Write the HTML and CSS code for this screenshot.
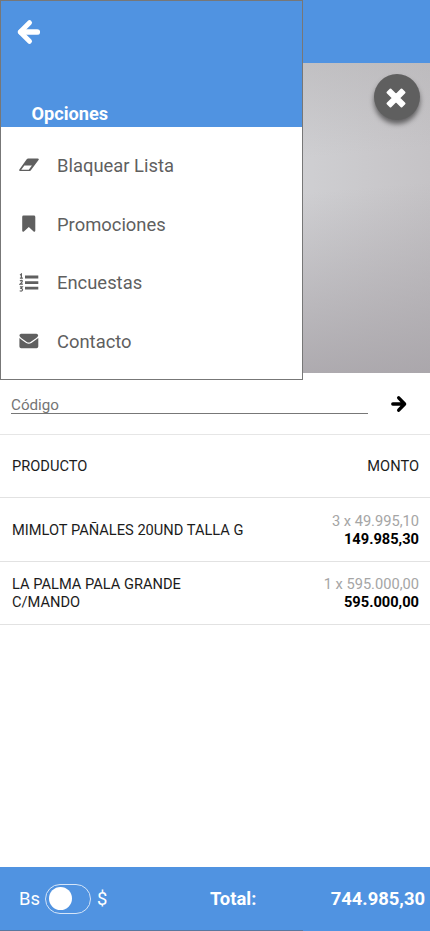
FILE: index.html
```html
<!DOCTYPE html>
<html lang="es">
<head>
<meta charset="utf-8">
<meta name="viewport" content="width=device-width, initial-scale=1">
<title>Lista</title>
<link rel="stylesheet" href="styles.css">
</head>
<body>
<div class="app">
  <header class="topbar"></header>
  <section class="camera">
    <button class="close" aria-label="Cerrar"><svg width="20" height="20" viewBox="0 0 20 20"><path d="M4.5 1.5L10 7L15.500 1.500L18.500 4.500L13 10L18.500 15.500L15.500 18.500L10 13L4.500 18.500L1.500 15.500L7 10L1.500 4.500Z"/></svg></button>
  </section>
  <form class="code">
    <input class="code-input" type="text" placeholder="Código">
    <button class="code-send" type="button" aria-label="Enviar"><svg width="16" height="18" viewBox="0 0 16 18"><path d="M1.8 9H13M7.7 2.8L13.6 9L7.7 15.2"/></svg></button>
  </form>
  <main class="list">
    <div class="row"><span>PRODUCTO</span><span>MONTO</span></div>
    <div class="row"><span class="name">MIMLOT PAÑALES 20UND TALLA G</span><div class="amount"><span class="unit">3 x 49.995,10</span><strong>149.985,30</strong></div></div>
    <div class="row"><span class="name">LA PALMA PALA GRANDE<br>C/MANDO</span><div class="amount"><span class="unit">1 x 595.000,00</span><strong>595.000,00</strong></div></div>
  </main>
  <footer class="footer">
    <div class="currency"><span>Bs</span><span class="switch"><span class="knob"></span></span><span>$</span></div>
    <strong class="total-label">Total:</strong>
    <strong class="total">744.985,30</strong>
  </footer>
  <aside class="drawer">
    <div class="drawer-head">
      <svg class="back" width="24" height="26" viewBox="0 0 24 26"><path class="shaft" d="M21.300 13H5"/><path d="M13.500 3.700L4.200 13L13.500 22.300"/></svg>
      <h2>Opciones</h2>
    </div>
    <nav class="menu">
      <a class="item"><svg width="20" height="20" viewBox="0 0 20 20"><path fill-rule="evenodd" d="M9.2 3.4H18.6Q20.4 3.7 19.5 5.1L11.9 15.2Q11.2 16.1 10 16.1H1.2Q-.5 15.8 .4 14.4L7.7 4.3Q8.2 3.5 9.2 3.4ZM5.400 10.500L2.200 14.800H9.800L12.900 10.500Z"/></svg><span>Blaquear Lista</span></a>
      <a class="item"><svg width="20" height="20" viewBox="0 0 20 20"><path d="M4.5 1.500H14.900Q16.300 1.500 16.300 2.900V16.700Q16 18.400 14.600 17.500L9.800 13L4.900 17.500Q3.500 18.400 3.200 16.700V2.900Q3.200 1.500 4.500 1.500Z"/></svg><span>Promociones</span></a>
      <a class="item"><svg width="20" height="20" viewBox="0 0 20 20"><path d="M6 2.600H19.300V5.400H6ZM6 8.200H19.300V11H6ZM6 13.800H19.300V16.600H6Z"/><path class="digits" d="M1 2.100L2.400 1V5.200M.9 5.200H3.900M.9 8Q3.100 6.600 3.300 8.100Q3.200 9.300 1 11.200H3.900M.9 13.800H3.300L2 15.500Q3.700 15.500 3.500 16.900Q3.100 18.600.7 17.800"/></svg><span>Encuestas</span></a>
      <a class="item"><svg width="20" height="20" viewBox="0 0 20 20"><path d="M2 2.700H17.500Q19.400 3 19.200 4.800Q18.600 6 17 7.200L11.500 10.900Q9.700 12.100 7.800 10.900L2.200 7Q.7 5.900.4 4.600Q.3 3 2 2.700ZM.4 7Q3.800 9.800 7.200 12Q9.800 13.600 12.400 12L19.300 7.100V15.500Q19.100 17.100 17.600 17.300H2.100Q.5 17.100.4 15.500Z"/></svg><span>Contacto</span></a>
    </nav>
  </aside>
  <div class="edge"></div>
</div>
</body>
</html>
```
FILE: styles.css
```css
* { box-sizing: border-box; }
body { margin: 0; background: #fff; font-family: Roboto, sans-serif; }
button { border: 0; padding: 0; }
.app {
  position: relative;
  width: 430px;
  height: 931px;
  display: flex;
  flex-direction: column;
  overflow: hidden;
}
.topbar { flex: none; height: 63px; background: #5093e1; }
.camera {
  flex: none;
  height: 310px;
  display: flex;
  justify-content: flex-end;
  align-items: flex-start;
  padding: 11px 10.5px 0 0;
  background:
    linear-gradient(175deg, rgba(178,176,178,.6) 0%, rgba(198,198,200,0) 35%, rgba(190,190,194,0) 45%, rgba(166,162,167,.85) 100%),
    linear-gradient(90deg, #cfcfd2 70%, #c5c3c6 100%);
}
.close {
  display: grid;
  place-items: center;
  width: 46px;
  height: 46px;
  border-radius: 50%;
  background: #5f5f5f;
  box-shadow: 0 4px 5px rgba(0,0,0,.5);
}
.close svg { fill: #fff; stroke: #fff; stroke-width: 2; stroke-linejoin: round; margin: 1px 1px 0 0; }
.code {
  flex: none;
  height: 62px;
  display: flex;
  align-items: flex-start;
  border-bottom: 1px solid #e6e6e6;
  padding: 22px 22px 0 11px;
}
.code-input {
  width: 357px;
  height: 19px;
  border: 0;
  border-bottom: 1px solid #777;
  padding: 1px 0 0;
  font: 15.2px Roboto, sans-serif;
  background: none;
  outline: 0;
}
.code-input::placeholder { color: #757575; opacity: 1; }
.code-send { background: none; margin-left: 23px; height: 18px; }
.code-send svg { display: block; fill: none; stroke: #000; stroke-width: 3.4; stroke-linecap: round; stroke-linejoin: round; }
.list { flex: 1; }
.row {
  display: flex;
  justify-content: space-between;
  align-items: center;
  height: 63.4px;
  padding: 2px 11px 0 12px;
  border-bottom: 1px solid #e2e2e2;
  font-size: 14.65px;
  line-height: 17.5px;
  color: #1c1c1c;
}
.amount { display: flex; flex-direction: column; align-items: flex-end; color: #000; }
.unit { color: #a5a5a5; }
.footer {
  flex: none;
  height: 64px;
  display: grid;
  grid-template-columns: 191px 90px 1fr;
  align-items: center;
  padding: 0 5px 1px 19px;
  background: #5093e1;
  color: #fff;
  font-size: 18.4px;
}
.currency { display: flex; align-items: center; gap: 5.5px; }
.switch {
  display: flex;
  align-items: center;
  width: 46px;
  height: 30px;
  padding-left: 3px;
  border: 1px solid #d5e5f8;
  border-radius: 15px;
}
.knob { width: 23px; height: 23px; border-radius: 50%; background: #fff; }
.total { text-align: right; }
.drawer {
  position: absolute;
  top: 0;
  left: 0;
  width: 303px;
  height: 380px;
  border: 1px solid #777;
  background: #fff;
}
.drawer-head {
  height: 126px;
  display: flex;
  flex-direction: column;
  justify-content: space-between;
  padding: 18px 0 2px 15px;
  background: #5093e1;
  color: #fff;
}
.back { fill: none; stroke: #fff; stroke-width: 5; stroke-linecap: round; stroke-linejoin: round; }
.shaft { stroke-width: 5.6; }
.drawer-head h2 { margin: 0 0 0 15.5px; font-size: 18.2px; line-height: 23px; }
.menu { padding-top: 9px; }
.item {
  display: flex;
  align-items: center;
  gap: 18px;
  height: 58.7px;
  padding-left: 18px;
  font-size: 18.4px;
  color: #5f5f5f;
}
.item svg { fill: #5f5f5f; }
.digits { fill: none; stroke: #5f5f5f; stroke-width: 1.2; }
.edge { position: absolute; left: 0; bottom: 0; width: 303px; height: 1px; background: #58779f; }
```
